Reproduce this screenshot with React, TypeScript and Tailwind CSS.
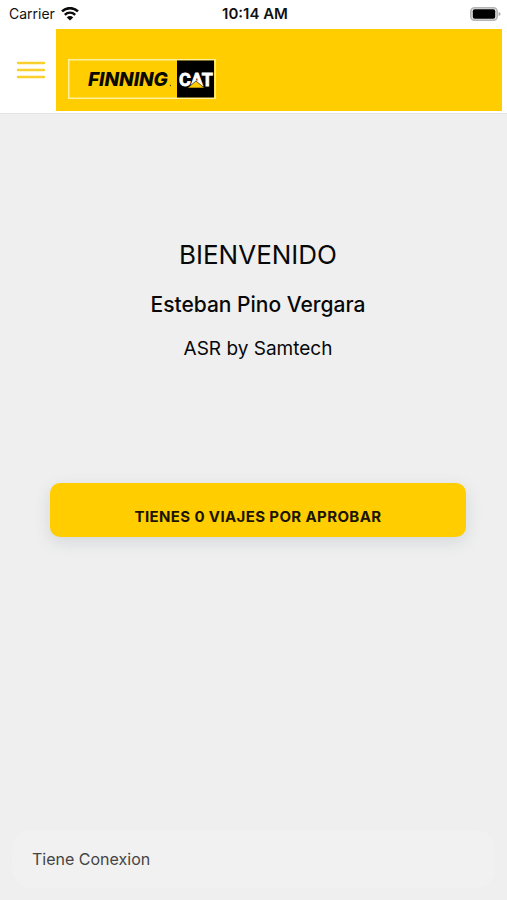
import React from 'react';

const WifiIcon: React.FC = () => (
  <svg width="18" height="14" viewBox="0 0 18 14" fill="none" stroke="#0b0b0b" aria-hidden="true">
    <path d="M1 4.4 A11.5 11.5 0 0 1 17 4.4" strokeWidth="2.6" />
    <path d="M3.8 7.8 A7.4 7.4 0 0 1 14.2 7.8" strokeWidth="2.4" />
    <path d="M9 13.6 L5.8 10.4 A4.6 4.6 0 0 1 12.2 10.4 Z" fill="#0b0b0b" stroke="none" />
  </svg>
);

const BatteryIcon: React.FC = () => (
  <svg width="31" height="14" viewBox="0 0 31 14" aria-hidden="true">
    <rect x="0.8" y="0.8" width="26.4" height="12.4" rx="3.8" fill="#e4e4e4" stroke="#b4b4b4" strokeWidth="1.6" />
    <rect x="2.8" y="2.3" width="22.4" height="9.4" rx="2" fill="#000" />
    <path d="M28.6 5 Q30.6 5.4 30.6 7 Q30.6 8.6 28.6 9 Z" fill="#a9a9a9" />
  </svg>
);

const StatusBar: React.FC = () => (
  <div className="grid h-[28px] grid-cols-3 items-center bg-white pr-[6px] pl-[9px] text-[#111]">
    <div className="flex items-center gap-[6px] text-[14px] leading-5">
      <span>Carrier</span>
      <WifiIcon />
    </div>
    <span className="text-center text-[15px] leading-5 font-semibold">10:14 AM</span>
    <div className="flex justify-end">
      <BatteryIcon />
    </div>
  </div>
);

const Logo: React.FC = () => (
  <svg width="148" height="40" viewBox="0 0 148 40" role="img" aria-label="Finning CAT">
    <rect x="0.75" y="0.75" width="146.5" height="38.5" fill="#ffcd00" stroke="#fff0a0" strokeWidth="1.5" />
    <rect x="109" y="1.5" width="37" height="37" fill="#000" />
    <text
      x="20"
      y="27"
      fontFamily="Inter, 'Liberation Sans', sans-serif"
      fontSize="19"
      fontWeight="800"
      fontStyle="italic"
      fill="#0a0a00"
    >
      FINNING
    </text>
    <circle cx="102.5" cy="26.5" r="0.7" fill="#5c4a00" />
    <text
      x="128"
      y="27"
      textAnchor="middle"
      fontFamily="Roboto, 'Liberation Sans', sans-serif"
      fontSize="18"
      fontWeight="700"
      fill="#fff"
      stroke="#fff"
      strokeWidth="0.8"
    >
      CAT
    </text>
    <path d="M119.5 29 L128 22 L136.5 29 Z" fill="#ffcd00" stroke="#000" strokeWidth="0.6" />
  </svg>
);

const Header: React.FC = () => (
  <header className="flex border-b border-[#e4e4e4] bg-white pt-px pr-[5px] pb-[2px]">
    <button type="button" aria-label="Menú" className="flex w-14 shrink-0 items-center justify-center pl-[6px]">
      <svg width="30" height="18" viewBox="0 0 30 18" stroke="#fad02c" strokeWidth="2.4" strokeLinecap="round" aria-hidden="true">
        <path d="M2 2 H28 M2 9 H28 M2 16 H28" />
      </svg>
    </button>
    <div className="flex h-[82px] flex-1 items-end bg-[#ffcd00] pb-3 pl-3">
      <Logo />
    </div>
  </header>
);

export default function App() {
  return (
    <div className="flex min-h-screen flex-col bg-[#efefef] font-['Inter','Liberation_Sans',sans-serif] text-[#080808]">
      <StatusBar />
      <Header />

      <main className="flex flex-1 flex-col pt-[125px] pr-[41px] pl-[50px] text-center">
        <h1 className="text-[26px] leading-8">BIENVENIDO</h1>
        <h2 className="mt-5 text-[21px] leading-7 font-medium">Esteban Pino Vergara</h2>
        <p className="mt-4 text-[19px] leading-7">ASR by Samtech</p>

        <button
          type="button"
          className="mt-[120px] h-[54px] w-full rounded-[10px] bg-[#ffcd00] pt-[14px] text-[15px] leading-5 font-bold tracking-wide text-[#1a1400] shadow-[0_5px_16px_rgba(60,80,100,0.15)]"
        >
          TIENES 0 VIAJES POR APROBAR
        </button>
      </main>

      <footer className="mx-3 mb-3 rounded-[20px] bg-[#f1f1f1] px-5 py-[17px] text-[16px] leading-6 text-[#444]">
        Tiene Conexion
      </footer>
    </div>
  );
}
